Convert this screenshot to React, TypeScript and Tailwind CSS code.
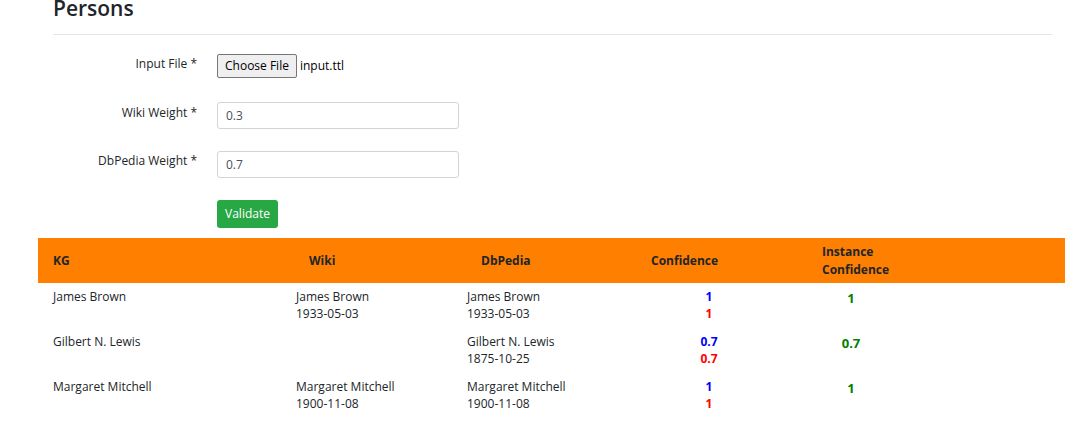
import React from "react";

type Row = {
  kg: string;
  wiki?: [string, string];
  dbpedia: [string, string];
  conf: [string, string];
  instance: string;
};

const rows: Row[] = [
  {
    kg: "James Brown",
    wiki: ["James Brown", "1933-05-03"],
    dbpedia: ["James Brown", "1933-05-03"],
    conf: ["1", "1"],
    instance: "1",
  },
  {
    kg: "Gilbert N. Lewis",
    dbpedia: ["Gilbert N. Lewis", "1875-10-25"],
    conf: ["0.7", "0.7"],
    instance: "0.7",
  },
  {
    kg: "Margaret Mitchell",
    wiki: ["Margaret Mitchell", "1900-11-08"],
    dbpedia: ["Margaret Mitchell", "1900-11-08"],
    conf: ["1", "1"],
    instance: "1",
  },
];

const cols = "grid grid-cols-[243px_171px_170px_174px_110px_1fr]";

export default function App() {
  return (
    <div
      className="w-[1076px] h-[432px] overflow-hidden bg-white text-[#212529]"
      style={{ fontFamily: '"Open Sans", "Noto Sans", Arial, sans-serif' }}
    >
      {/* Заголовок */}
      <div className="px-[53px] pr-[24px]">
        <h2 className="text-[21px] font-semibold leading-[24px] -mt-[4px] pb-[14px] border-b border-[#e5e5e5]">
          Persons
        </h2>
      </div>

      {/* Форма */}
      <div className="px-[53px] pt-[18px] text-[12px]">
        <div className="flex items-center h-[26px]">
          <label className="w-[144px] text-right -mt-[4px]">Input File *</label>
          <div className="ml-[20px] flex items-center">
            <button className="h-[24px] px-[7px] bg-[#efefef] border border-[#767676] rounded-[2px] text-[12px] leading-none text-black">
              Choose File
            </button>
            <span className="ml-[3px] text-black">input.ttl</span>
          </div>
        </div>

        <div className="flex items-start mt-[23px]">
          <label className="w-[144px] text-right pt-[2px]">Wiki Weight *</label>
          <input
            className="ml-[20px] w-[242px] h-[27px] px-[8px] border border-[#ced4da] rounded-[3px] text-[12px] text-[#495057]"
            defaultValue="0.3"
          />
        </div>

        <div className="flex items-start mt-[22px]">
          <label className="w-[144px] text-right pt-[1px]">DbPedia Weight *</label>
          <input
            className="ml-[20px] w-[242px] h-[27px] px-[8px] border border-[#ced4da] rounded-[3px] text-[12px] text-[#495057]"
            defaultValue="0.7"
          />
        </div>

        <div className="flex mt-[22px]">
          <button className="ml-[164px] w-[61px] h-[28px] bg-[#28a745] rounded-[3px] text-white text-[12px]">
            Validate
          </button>
        </div>
      </div>

      {/* Таблица */}
      <div className="ml-[38px] w-[1027px] mt-[10px] text-[12px]">
        <div className={`${cols} bg-[#ff8000] h-[45px] items-center font-bold`}>
          <div className="pl-[15px]">KG</div>
          <div className="pl-[28px]">Wiki</div>
          <div className="pl-[29px]">DbPedia</div>
          <div className="pl-[29px]">Confidence</div>
          <div className="pl-[26px] leading-[18px]">
            Instance
            <br />
            Confidence
          </div>
          <div />
        </div>

        {rows.map((r) => (
          <div key={r.kg} className={`${cols} h-[45px] pt-[5px] leading-[17px]`}>
            <div className="pl-[15px]">{r.kg}</div>
            <div className="pl-[15px]">
              {r.wiki && (
                <>
                  <div>{r.wiki[0]}</div>
                  <div>{r.wiki[1]}</div>
                </>
              )}
            </div>
            <div className="pl-[15px]">
              <div>{r.dbpedia[0]}</div>
              <div>{r.dbpedia[1]}</div>
            </div>
            <div className="text-center font-bold">
              <div className="text-[#0000ff]">{r.conf[0]}</div>
              <div className="text-[#ff0000]">{r.conf[1]}</div>
            </div>
            <div className="text-center font-bold text-[#008000] text-[13px] pt-[2px]">
              {r.instance}
            </div>
            <div />
          </div>
        ))}
      </div>
    </div>
  );
}
